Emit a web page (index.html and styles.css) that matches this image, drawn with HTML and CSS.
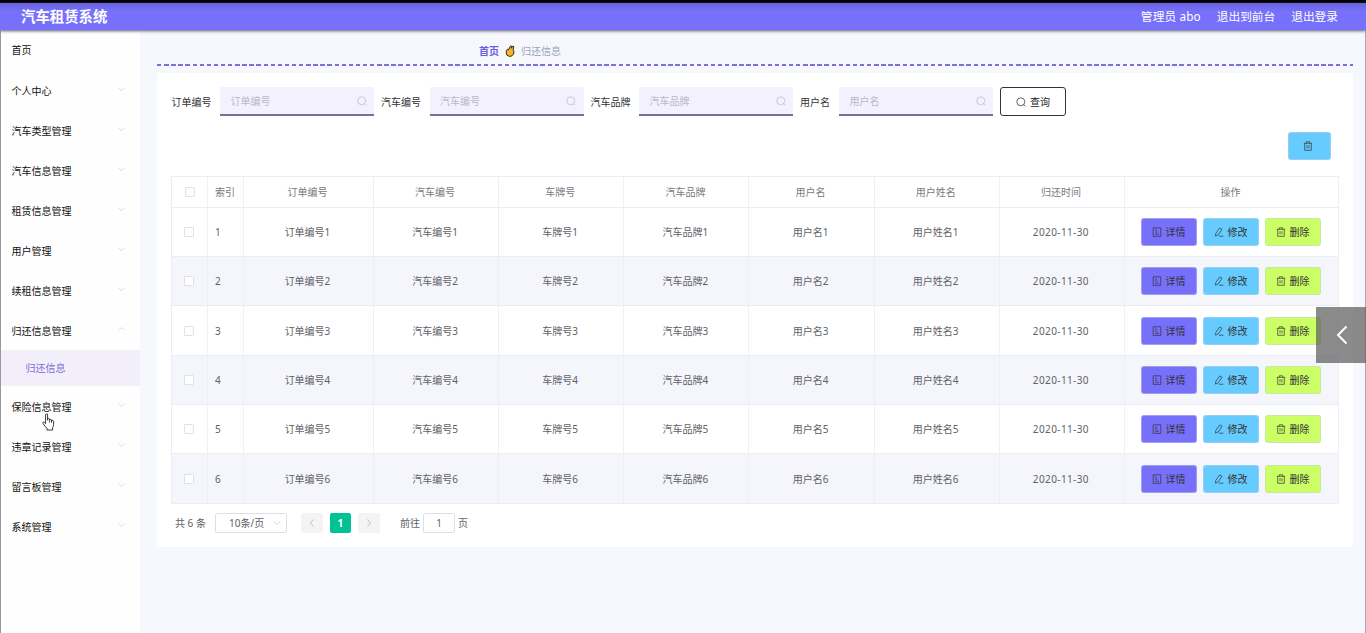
FILE: index.html
```html
<!DOCTYPE html>
<html lang="zh-CN">
<head>
    <meta charset="UTF-8">
    <meta name="viewport" content="width=device-width, initial-scale=1.0">
    <title>汽车租赁系统</title>
    <link rel="stylesheet" href="styles.css">
</head>
<body>
    <svg class="sprite">
        <symbol id="down" viewBox="0 0 10 10"><path d="M1.5 3.5 5 6.5 8.5 3.5"/></symbol>
        <symbol id="up" viewBox="0 0 10 10"><path d="M1.5 6.5 5 3.5 8.5 6.5"/></symbol>
        <symbol id="left" viewBox="0 0 10 10"><path d="M6.5 1.5 3.5 5 6.5 8.5"/></symbol>
        <symbol id="right" viewBox="0 0 10 10"><path d="M3.5 1.5 6.5 5 3.5 8.5"/></symbol>
        <symbol id="search" viewBox="0 0 10 10"><circle cx="4.8" cy="4.8" r="4"/><path d="M7.6 7.6 9.3 9.3"/></symbol>
        <symbol id="detail" viewBox="0 0 10 10"><path d="M1.2.8h7.6v8.6H1.2zM3 3.2h2M3 5.2h2.5M3 7.3h4"/></symbol>
        <symbol id="edit" viewBox="0 0 10 10"><path d="M5.8.9 8 2.3 4.2 8 1.5 9.1 1.8 6.4zM5 9.2h4.4"/></symbol>
        <symbol id="trash" viewBox="0 0 10 10"><path d="M.8 2.3h8.4M3.3 2.3V.8h3.4v1.5M1.7 2.3v7h6.6v-7M4 4.2v3.2M6 4.2v3.2"/></symbol>
    </svg>

    <div class="page">
        <header class="header">
            <h1 class="title">汽车租赁系统</h1>
            <nav class="user-nav">
                <span>管理员 abo</span>
                <span>退出到前台</span>
                <span>退出登录</span>
            </nav>
        </header>

        <div class="container">
            <aside class="sidebar">
                <div class="menu-item">首页</div>
                <div class="menu-item">个人中心<svg class="icon"><use href="#down"/></svg></div>
                <div class="menu-item">汽车类型管理<svg class="icon"><use href="#down"/></svg></div>
                <div class="menu-item">汽车信息管理<svg class="icon"><use href="#down"/></svg></div>
                <div class="menu-item">租赁信息管理<svg class="icon"><use href="#down"/></svg></div>
                <div class="menu-item">用户管理<svg class="icon"><use href="#down"/></svg></div>
                <div class="menu-item">续租信息管理<svg class="icon"><use href="#down"/></svg></div>
                <div class="menu-item">归还信息管理<svg class="icon"><use href="#up"/></svg></div>
                <div class="submenu-item">归还信息</div>
                <div class="menu-item">保险信息管理<svg class="icon"><use href="#down"/></svg></div>
                <div class="menu-item">违章记录管理<svg class="icon"><use href="#down"/></svg></div>
                <div class="menu-item">留言板管理<svg class="icon"><use href="#down"/></svg></div>
                <div class="menu-item">系统管理<svg class="icon"><use href="#down"/></svg></div>
            </aside>

            <main class="main">
                <div class="breadcrumb">
                    <b>首页</b>
                    <svg class="hand" viewBox="0 0 10 12"><path d="M3.4 5.2 5.3 1.2Q6 .2 6.6 1.3L6.2 3.3 7.7 1.2Q8.8.8 8.8 2L8 4.8Q9.6 6.4 8.6 9 7.4 11.6 4.4 11.4 1.2 11 1.2 7.8 1.3 4.4 2.6 4.2 3.5 4.3 3.4 5.2z"/></svg>
                    <span>归还信息</span>
                </div>

                <div class="card">
                    <div class="search-form">
                        <label>订单编号</label>
                        <div class="field">订单编号<svg class="icon"><use href="#search"/></svg></div>
                        <label>汽车编号</label>
                        <div class="field">汽车编号<svg class="icon"><use href="#search"/></svg></div>
                        <label>汽车品牌</label>
                        <div class="field">汽车品牌<svg class="icon"><use href="#search"/></svg></div>
                        <label class="short">用户名</label>
                        <div class="field">用户名<svg class="icon"><use href="#search"/></svg></div>
                        <button class="query"><svg class="icon"><use href="#search"/></svg>查询</button>
                    </div>

                    <div class="toolbar">
                        <button class="btn btn-batch"><svg class="icon"><use href="#trash"/></svg></button>
                    </div>

                    <table class="table">
                        <colgroup>
                            <col class="col-check"><col class="col-index"><col class="col-order">
                            <col><col><col><col><col><col>
                            <col class="col-action">
                        </colgroup>
                        <thead>
                            <tr>
                                <th><i class="checkbox"></i></th>
                                <th class="index">索引</th>
                                <th>订单编号</th>
                                <th>汽车编号</th>
                                <th>车牌号</th>
                                <th>汽车品牌</th>
                                <th>用户名</th>
                                <th>用户姓名</th>
                                <th>归还时间</th>
                                <th>操作</th>
                            </tr>
                        </thead>
                        <tbody>
                            <tr>
                                <td><i class="checkbox"></i></td>
                                <td class="index">1</td>
                                <td>订单编号1</td>
                                <td>汽车编号1</td>
                                <td>车牌号1</td>
                                <td>汽车品牌1</td>
                                <td>用户名1</td>
                                <td>用户姓名1</td>
                                <td class="date">2020-11-30</td>
                                <td>
                                    <div class="actions">
                                        <button class="btn btn-detail"><svg class="icon"><use href="#detail"/></svg>详情</button>
                                        <button class="btn btn-edit"><svg class="icon"><use href="#edit"/></svg>修改</button>
                                        <button class="btn btn-delete"><svg class="icon"><use href="#trash"/></svg>删除</button>
                                    </div>
                                </td>
                            </tr>
                            <tr>
                                <td><i class="checkbox"></i></td>
                                <td class="index">2</td>
                                <td>订单编号2</td>
                                <td>汽车编号2</td>
                                <td>车牌号2</td>
                                <td>汽车品牌2</td>
                                <td>用户名2</td>
                                <td>用户姓名2</td>
                                <td class="date">2020-11-30</td>
                                <td>
                                    <div class="actions">
                                        <button class="btn btn-detail"><svg class="icon"><use href="#detail"/></svg>详情</button>
                                        <button class="btn btn-edit"><svg class="icon"><use href="#edit"/></svg>修改</button>
                                        <button class="btn btn-delete"><svg class="icon"><use href="#trash"/></svg>删除</button>
                                    </div>
                                </td>
                            </tr>
                            <tr>
                                <td><i class="checkbox"></i></td>
                                <td class="index">3</td>
                                <td>订单编号3</td>
                                <td>汽车编号3</td>
                                <td>车牌号3</td>
                                <td>汽车品牌3</td>
                                <td>用户名3</td>
                                <td>用户姓名3</td>
                                <td class="date">2020-11-30</td>
                                <td>
                                    <div class="actions">
                                        <button class="btn btn-detail"><svg class="icon"><use href="#detail"/></svg>详情</button>
                                        <button class="btn btn-edit"><svg class="icon"><use href="#edit"/></svg>修改</button>
                                        <button class="btn btn-delete"><svg class="icon"><use href="#trash"/></svg>删除</button>
                                    </div>
                                </td>
                            </tr>
                            <tr>
                                <td><i class="checkbox"></i></td>
                                <td class="index">4</td>
                                <td>订单编号4</td>
                                <td>汽车编号4</td>
                                <td>车牌号4</td>
                                <td>汽车品牌4</td>
                                <td>用户名4</td>
                                <td>用户姓名4</td>
                                <td class="date">2020-11-30</td>
                                <td>
                                    <div class="actions">
                                        <button class="btn btn-detail"><svg class="icon"><use href="#detail"/></svg>详情</button>
                                        <button class="btn btn-edit"><svg class="icon"><use href="#edit"/></svg>修改</button>
                                        <button class="btn btn-delete"><svg class="icon"><use href="#trash"/></svg>删除</button>
                                    </div>
                                </td>
                            </tr>
                            <tr>
                                <td><i class="checkbox"></i></td>
                                <td class="index">5</td>
                                <td>订单编号5</td>
                                <td>汽车编号5</td>
                                <td>车牌号5</td>
                                <td>汽车品牌5</td>
                                <td>用户名5</td>
                                <td>用户姓名5</td>
                                <td class="date">2020-11-30</td>
                                <td>
                                    <div class="actions">
                                        <button class="btn btn-detail"><svg class="icon"><use href="#detail"/></svg>详情</button>
                                        <button class="btn btn-edit"><svg class="icon"><use href="#edit"/></svg>修改</button>
                                        <button class="btn btn-delete"><svg class="icon"><use href="#trash"/></svg>删除</button>
                                    </div>
                                </td>
                            </tr>
                            <tr>
                                <td><i class="checkbox"></i></td>
                                <td class="index">6</td>
                                <td>订单编号6</td>
                                <td>汽车编号6</td>
                                <td>车牌号6</td>
                                <td>汽车品牌6</td>
                                <td>用户名6</td>
                                <td>用户姓名6</td>
                                <td class="date">2020-11-30</td>
                                <td>
                                    <div class="actions">
                                        <button class="btn btn-detail"><svg class="icon"><use href="#detail"/></svg>详情</button>
                                        <button class="btn btn-edit"><svg class="icon"><use href="#edit"/></svg>修改</button>
                                        <button class="btn btn-delete"><svg class="icon"><use href="#trash"/></svg>删除</button>
                                    </div>
                                </td>
                            </tr>
                        </tbody>
                    </table>

                    <div class="pagination">
                        <span class="total">共 6 条</span>
                        <div class="page-size">10条/页<svg class="icon"><use href="#down"/></svg></div>
                        <div class="pager">
                            <button class="page-btn"><svg class="icon"><use href="#left"/></svg></button>
                            <button class="page-btn active">1</button>
                            <button class="page-btn"><svg class="icon"><use href="#right"/></svg></button>
                        </div>
                        <div class="jump">前往<span class="jump-input">1</span>页</div>
                    </div>
                </div>
            </main>
        </div>
    </div>

    <div class="drawer-handle">
        <svg viewBox="0 0 12 20"><path d="M10.5 1.5 2 10l8.5 8.5"/></svg>
    </div>

    <svg class="cursor" viewBox="0 0 13 18"><path d="M3.6 10.6V2Q3.6.8 4.6.8T5.6 2v5.2-1.4q1-.8 2 .2v1.4-.8q1.1-.7 2 .3v1-.5q1.6-.5 2 1v3.2q0 1.6-1 3V17H5v-1.6Q3 13.6 1 10.4q-.5-1.2.5-1.4 1 .2 2.1 1.6zM7.6 7.4v2M9.6 7.9v1.8"/></svg>
</body>
</html>
```
FILE: styles.css
```css
* {
    box-sizing: border-box;
}

body {
    margin: 0;
    height: 633px;
    overflow: hidden;
    font-family: "Noto Sans", "Noto Sans CJK SC", sans-serif;
    font-size: 10px;
    line-height: 14px;
    color: #606266;
    background: #f7f8fd;
}

button {
    font: inherit;
    margin: 0;
    padding: 0;
}

.sprite {
    display: none;
}

.icon {
    width: 10px;
    height: 10px;
    flex-shrink: 0;
    fill: none;
    stroke: currentColor;
    stroke-width: 0.7;
}

.page {
    display: flex;
    flex-direction: column;
    height: 633px;
    border-top: 3px solid #000;
}

/* header */
.header {
    display: flex;
    align-items: center;
    justify-content: space-between;
    height: 27px;
    padding: 0 28px 0 21px;
    color: #fff;
    background: linear-gradient(#6962dc, #7670fb 8px);
    box-shadow: 0 1px 3px #555577;
    position: relative;
}

.title {
    margin: 0;
    font-size: 14.4px;
    font-weight: bold;
    line-height: 20px;
}

.user-nav {
    display: flex;
    gap: 16px;
    padding-bottom: 2px;
    font-size: 11.7px;
}

.user-nav span:first-child {
    letter-spacing: 0.15px;
}

.container {
    display: flex;
    flex: 1;
    border-left: 1px solid #999;
    border-right: 1px solid #aaa;
}

/* sidebar */
.sidebar {
    flex-shrink: 0;
    width: 139px;
    background: #fefefe;
    color: #111;
}

.menu-item {
    display: flex;
    align-items: center;
    justify-content: space-between;
    height: 40px;
    padding: 1px 14px 0 10.4px;
}

.menu-item:first-child {
    padding-top: 0;
}

.menu-item .icon {
    width: 9px;
    color: #c9c9cf;
    margin-top: -4px;
}

.submenu-item {
    height: 36px;
    padding-left: 24.5px;
    line-height: 36px;
    color: #7c6ed8;
    background: #f2effb;
}

/* content */
.main {
    flex: 1;
    min-width: 0;
    padding: 0 12px 0 16px;
    margin-left: 1px;
}

.breadcrumb {
    display: flex;
    align-items: center;
    gap: 6px;
    height: 36px;
    padding: 5px 0 0 322px;
    margin-bottom: 7px;
    color: #97a3b8;
    background: repeating-linear-gradient(90deg, #7b72d8 0, #7b72d8 4.4px, transparent 4.4px, transparent 7.1px) left bottom / 100% 2px no-repeat;
}

.breadcrumb b {
    color: #6a5fe0;
}

.hand {
    width: 10px;
    height: 12px;
    fill: #f5b52e;
    stroke: #3b2a12;
    stroke-width: 1;
}

.card {
    height: 474px;
    padding: 14px 14px 0;
    background: #fff;
}

.search-form {
    display: flex;
    align-items: center;
    height: 29px;
    color: #333;
}

.search-form label {
    width: 49px;
    padding-left: 0.5px;
}

.search-form .short {
    width: 39.5px;
}

.field {
    display: flex;
    align-items: center;
    justify-content: space-between;
    width: 154px;
    height: 29px;
    margin-right: 6.5px;
    padding: 0 7.5px 0 10.5px;
    color: #b9b8c8;
    background: #f3f1fe;
    border-bottom: 2px solid #77728f;
    border-radius: 2px 2px 0 0;
}

.query {
    display: flex;
    align-items: center;
    justify-content: center;
    gap: 4px;
    width: 66px;
    height: 29px;
    margin-left: 0.5px;
    color: #222;
    background: #fff;
    border: 1px solid #333;
    border-radius: 3px;
}

.toolbar {
    display: flex;
    justify-content: flex-end;
    padding: 16px 8px;
}

.btn {
    display: flex;
    align-items: center;
    justify-content: center;
    gap: 4px;
    width: 56px;
    height: 28px;
    color: #333;
    border: 1px solid rgba(200, 205, 225, 0.5);
    border-radius: 3px;
}

.btn-detail {
    background: #7670fb;
}

.btn-edit {
    background: #66ccff;
}

.btn-delete {
    background: #ccff66;
}

.btn-batch {
    width: 43px;
    padding-right: 4px;
    background: #66ccff;
}

/* table */
.table {
    width: 1168px;
    table-layout: fixed;
    border-spacing: 0;
    border-top: 1px solid #ebeef5;
    border-left: 1px solid #ebeef5;
}

.col-check,
.col-index {
    width: 36px;
}

.col-order {
    width: 130px;
}

.col-action {
    width: 214px;
}

.table th,
.table td {
    padding: 0 2px 0 0;
    font-weight: normal;
    text-align: center;
    border-right: 1px solid #eff0f6;
    border-bottom: 1px solid #ebedf4;
}

.table th {
    height: 31px;
    color: #777a80;
}

.table td {
    height: 49px;
}

.table tr:nth-child(3n) td {
    height: 50px;
}

.table tbody tr:nth-child(even) {
    background: #f5f5fc;
}

.table .index {
    padding: 0 0 0 7px;
    text-align: left;
}

.table .date {
    letter-spacing: 0.4px;
}

.checkbox {
    display: block;
    width: 10px;
    height: 10px;
    margin-left: 13px;
    background: #fff;
    border: 1px solid #e0e2e8;
    border-radius: 1px;
}

td .checkbox {
    margin-left: 12px;
}

.actions {
    display: flex;
    justify-content: center;
    gap: 6px;
}

/* pagination */
.pagination {
    display: flex;
    align-items: center;
    height: 20px;
    margin-top: 9px;
    padding-left: 4px;
}

.total {
    width: 40px;
}

.page-size {
    display: flex;
    align-items: center;
    justify-content: space-between;
    width: 72px;
    height: 20px;
    padding: 0 4px 0 13px;
    border: 1px solid #dcdfe6;
    border-radius: 2px;
}

.page-size .icon {
    color: #c0c4cc;
}

.pager {
    display: flex;
    gap: 7px;
    margin: 0 20.5px 0 14px;
}

.page-btn {
    display: flex;
    align-items: center;
    justify-content: center;
    width: 21.5px;
    height: 20px;
    color: #a5a8ae;
    background: #f4f4f5;
    border: none;
    border-radius: 2px;
}

.active {
    color: #fff;
    font-weight: bold;
    background: #00c292;
}

.jump {
    display: flex;
    align-items: center;
    gap: 3px;
}

.jump-input {
    width: 32px;
    height: 20px;
    line-height: 18px;
    text-align: center;
    border: 1px solid #dcdfe6;
    border-radius: 2px;
}

/* floating parts */
.drawer-handle {
    position: absolute;
    top: 307px;
    right: 0;
    display: flex;
    align-items: center;
    justify-content: center;
    width: 50px;
    height: 56px;
    background: rgba(90, 90, 90, 0.7);
}

.drawer-handle svg {
    width: 12px;
    height: 20px;
    margin-left: 2px;
    fill: none;
    stroke: #fff;
    stroke-width: 2;
}

.cursor {
    position: absolute;
    top: 413px;
    left: 42px;
    width: 13px;
    height: 18px;
    fill: #fff;
    stroke: #222;
    stroke-width: 0.9;
}
```
